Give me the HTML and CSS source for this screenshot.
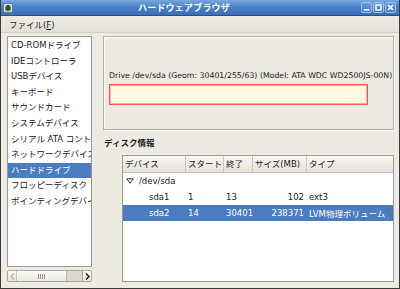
FILE: index.html
```html
<!DOCTYPE html>
<html lang="ja">
<head>
    <meta charset="UTF-8">
    <title>ハードウェアブラウザ</title>
    <link rel="stylesheet" href="styles.css">
</head>
<body>
    <div class="window">
        <div class="titlebar">
            <svg class="app-icon" width="10" height="10" viewBox="0 0 10 10">
                <rect x="0.5" y="0.5" width="9" height="9" rx="1.5" fill="#d8dde4" stroke="#6b7b8c"/>
                <circle cx="5" cy="5.5" r="3" fill="#3f9b3a"/>
                <rect x="3.5" y="2" width="3" height="5" fill="#2d3b4a"/>
            </svg>
            <div class="title">ハードウェアブラウザ</div>
            <div class="wm-buttons">
                <span class="wm-btn">
                    <svg width="9" height="9" viewBox="0 0 9 9"><rect x="1.5" y="6" width="6" height="1.6" fill="#fff"/></svg>
                </span>
                <span class="wm-btn">
                    <svg width="9" height="9" viewBox="0 0 9 9"><rect x="2" y="2" width="5" height="5" fill="none" stroke="#fff" stroke-width="1.4"/></svg>
                </span>
                <span class="wm-btn">
                    <svg width="9" height="9" viewBox="0 0 9 9"><path d="M2 2 L7 7 M7 2 L2 7" stroke="#fff" stroke-width="1.6"/></svg>
                </span>
            </div>
        </div>

        <div class="menubar">
            <span class="menu-item">ファイル(<u>F</u>)</span>
        </div>

        <div class="main">
            <div class="sidebar">
                <ul class="device-list">
                    <li>CD-ROMドライブ</li>
                    <li>IDEコントローラ</li>
                    <li>USBデバイス</li>
                    <li>キーボード</li>
                    <li>サウンドカード</li>
                    <li>システムデバイス</li>
                    <li>シリアル ATA コントローラ</li>
                    <li>ネットワークデバイス</li>
                    <li class="selected">ハードドライブ</li>
                    <li>フロッピーディスク</li>
                    <li>ポインティングデバイス</li>
                </ul>
                <div class="hscroll">
                    <span class="scroll-btn">
                        <svg width="5" height="7" viewBox="0 0 5 7"><path d="M4 0.5 L1 3.5 L4 6.5" fill="none" stroke="#b5b1a6" stroke-width="1.2"/></svg>
                    </span>
                    <span class="scroll-thumb"><span class="grip-v"></span></span>
                    <span class="scroll-trough"></span>
                    <span class="scroll-btn">
                        <svg width="5" height="7" viewBox="0 0 5 7"><path d="M1 0.5 L4 3.5 L1 6.5" fill="none" stroke="#1a1a1a" stroke-width="1.4"/></svg>
                    </span>
                </div>
            </div>

            <div class="hpane-handle"><span class="dots-v"></span></div>

            <div class="content">
                <div class="drive-frame">
                    <div class="drive-label">Drive /dev/sda (Geom: 30401/255/63) (Model: ATA WDC WD2500JS-00N)</div>
                    <div class="drive-bar"></div>
                </div>
                <div class="vpane-handle"><span class="dots-h"></span></div>
                <div class="section-title">ディスク情報</div>
                <div class="tree">
                    <div class="tree-row tree-head">
                        <span class="cell">デバイス</span>
                        <span class="cell">スタート</span>
                        <span class="cell">終了</span>
                        <span class="cell">サイズ(MB)</span>
                        <span class="cell">タイプ</span>
                    </div>
                    <div class="tree-row">
                        <span class="cell parent">
                            <svg class="expander" width="8" height="6" viewBox="0 0 8 6"><path d="M0.8 0.8 H7.2 L4 5.2 Z" fill="none" stroke="#333" stroke-width="1"/></svg>/dev/sda
                        </span>
                    </div>
                    <div class="tree-row">
                        <span class="cell child">sda1</span>
                        <span class="cell">1</span>
                        <span class="cell">13</span>
                        <span class="cell num">102</span>
                        <span class="cell">ext3</span>
                    </div>
                    <div class="tree-row selected">
                        <span class="cell child">sda2</span>
                        <span class="cell">14</span>
                        <span class="cell">30401</span>
                        <span class="cell num">238371</span>
                        <span class="cell">LVM物理ボリューム</span>
                    </div>
                </div>
            </div>
        </div>
    </div>
</body>
</html>
```

FILE: styles.css
```css
html, body { margin: 0; padding: 0; }
body { font-family: "DejaVu Sans", "Noto Sans CJK JP", sans-serif; font-size: 8.5px; color: #1a1a1a; background: #edeae3; }

.window { width: 400px; height: 289px; box-sizing: border-box; display: flex; flex-direction: column; background: #edeae3; border: 1px solid #3a3a3a; border-top: none; overflow: hidden; }

.titlebar { height: 15px; flex: none; display: flex; align-items: center; background: linear-gradient(#7aa8de, #4a82c8 45%, #3a6fb6); border-bottom: 1px solid #2b4f80; padding: 0 3px 0 2px; }
.app-icon { flex: none; }
.title { flex: 1; text-align: center; color: #fff; font-weight: bold; font-size: 9px; letter-spacing: 0.2px; padding-right: 6px; }
.wm-buttons { display: flex; gap: 1px; }
.wm-btn { width: 11px; height: 11px; box-sizing: border-box; border: 1px solid #9fc0e8; border-radius: 2px; background: linear-gradient(#6d9fdc, #4479c1); display: flex; align-items: center; justify-content: center; }

.menubar { height: 16px; flex: none; display: flex; align-items: center; background: linear-gradient(#efece6, #e3dfd6); border-bottom: 1px solid #d3cec3; padding-left: 8px; }
.menu-item { font-size: 8.5px; }
.menu-item u { text-decoration-thickness: 1px; }

.main { flex: 1; display: flex; min-height: 0; padding: 3px 5px 6px 6px; }

.sidebar { width: 85px; flex: none; display: flex; flex-direction: column; }
.device-list { list-style: none; margin: 0; padding: 1px 0 0; flex: 1; background: #fff; border: 1px solid #9e9a8f; overflow: hidden; }
.device-list li { height: 15.6px; line-height: 15.6px; padding-left: 3px; white-space: nowrap; overflow: hidden; }
.device-list li.selected { background: #4a7cc0; color: #fff; }

.hscroll { height: 10px; margin-top: 3px; display: flex; border: 1px solid #a9a597; border-radius: 2px; background: #dcd8cf; }
.scroll-btn { width: 8px; display: flex; align-items: center; justify-content: center; background: linear-gradient(#fbfaf8, #e9e6df); }
.scroll-btn:first-child { border-right: 1px solid #c9c5ba; }
.scroll-btn:last-child { border-left: 1px solid #a9a597; }
.scroll-thumb { width: 49px; display: flex; align-items: center; justify-content: center; background: linear-gradient(#fbfaf8, #ebe8e1); border-right: 1px solid #b9b5aa; }
.scroll-trough { flex: 1; }
.grip-v { width: 7px; height: 5px; background: repeating-linear-gradient(90deg, #9c988d 0 1px, transparent 1px 2px); }

.hpane-handle { width: 11px; flex: none; display: flex; align-items: center; justify-content: center; }
.dots-v { width: 3px; height: 26px; background: radial-gradient(circle, #b0ac9f 0.6px, transparent 0.7px) 0 0 / 2px 2px; }

.content { flex: 1; display: flex; flex-direction: column; min-width: 0; }

.drive-frame { height: 94px; flex: none; border: 1px solid #b4af9f; box-shadow: inset 1px 1px 0 #fff, 1px 1px 0 #fff; padding: 33px 4px 0 5px; box-sizing: border-box; }
.drive-label { white-space: nowrap; height: 11px; line-height: 11px; font-size: 7.8px; }
.drive-bar { width: 259px; height: 21px; margin-top: 3px; box-sizing: border-box; background: #fff8e1; border: 1px solid #f0584e; box-shadow: inset 0 0 0 1px #f8b0a0; }

.vpane-handle { height: 7px; flex: none; display: flex; justify-content: center; align-items: center; padding-right: 20px; }
.dots-h { width: 12px; height: 3px; background: radial-gradient(circle, #b0ac9f 0.6px, transparent 0.7px) 0 0 / 2px 2px; }

.section-title { font-weight: bold; height: 12px; line-height: 12px; padding-left: 1px; }

.tree { flex: 1; margin: 6px 0 0 19px; background: #fff; border: 1px solid #9e9a8f; overflow: hidden; }
.tree-row { display: grid; grid-template-columns: 63px 38px 29px 54px 1fr; height: 16px; align-items: center; white-space: nowrap; }
.tree-row .cell { padding-left: 2px; overflow: hidden; }
.tree-row .num { text-align: right; padding: 0 3px 0 0; }
.tree-head { height: 16px; background: linear-gradient(#f7f6f3, #e6e2da); border-bottom: 1px solid #c9c4b8; }
.tree-head .cell { border-right: 1px solid #cdc9be; height: 16px; line-height: 16px; box-sizing: border-box; }
.tree-head .cell:last-child { border-right: none; }
.parent { grid-column: 1 / -1; display: flex; align-items: center; }
.expander { margin: 0 5px 0 1px; }
.child { padding-left: 26px !important; }
.tree-row.selected { background: #4a7cc0; color: #fff; }
```
